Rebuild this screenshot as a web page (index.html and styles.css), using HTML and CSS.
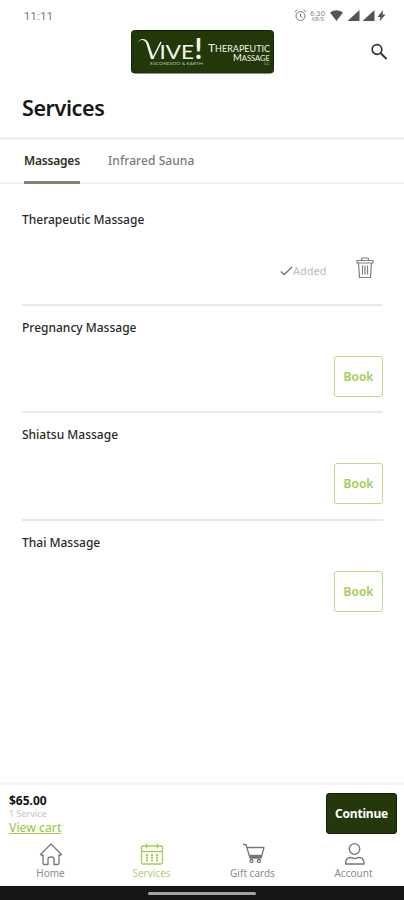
FILE: index.html
```html
<!DOCTYPE html>
<html lang="en">
<head>
<meta charset="utf-8">
<title>Services</title>
<link rel="stylesheet" href="styles.css">
</head>
<body>
<div class="app">
  <div class="status">
    <span class="clock">11:11</span>
    <svg class="status-icons" width="94" height="14" viewBox="0 0 94 14">
      <g fill="none" stroke="#777" stroke-width="1"><circle cx="6.500" cy="7" r="4.500"/><path d="M6.500 4.500v3l2 1M1 3l2.500-2.300M9.500 .7l2.500 2.300"/></g>
      <g fill="#8a8a8a" font-family="Roboto, sans-serif"><text x="16" y="6.500" font-size="7" textLength="15" lengthAdjust="spacingAndGlyphs">6.30</text><text x="18" y="11.500" font-size="5" textLength="12" lengthAdjust="spacingAndGlyphs">KB/S</text></g>
      <g fill="#555"><path d="M36 3.500q6.500-4.500 13 0L42.500 12z"/><path d="M53.500 12h12V1z"/><path d="M68.500 12h12V1z"/><path d="M89 1l-5.500 7h3l-1 4.500 6-7h-3z"/></g>
    </svg>
  </div>
  <header class="header">
    <svg class="logo" width="144" height="44" viewBox="0 0 144 44">
      <rect x=".5" y=".5" width="142" height="42.500" rx="3" fill="#223808" stroke="#14240a"/>
      <path d="M6 14C8 8.500 14 9 15.500 14l4.500 15h3l-5.500-16C15 7.500 8 7.500 6 14z" fill="#f5f7ee"/>
      <path d="M21.500 29l8.500-17" fill="none" stroke="#f5f7ee" stroke-width="1.500"/>
      <g fill="#f5f7ee" font-family="Lato, sans-serif">
        <text x="28.500" y="29" font-size="20" textLength="34.500" lengthAdjust="spacingAndGlyphs">IVE</text>
        <text x="63.500" y="29" font-size="28" font-weight="700">!</text>
        <text x="19" y="35" font-size="4.500" fill="#b9c2a8" textLength="53" lengthAdjust="spacingAndGlyphs">ESCONDIDO &amp; EARTH</text>
        <text x="77" y="22" font-size="9" textLength="62" lengthAdjust="spacingAndGlyphs"><tspan font-size="12">T</tspan>HERAPEUTIC</text>
        <text x="102" y="30.500" font-size="8" textLength="37" lengthAdjust="spacingAndGlyphs"><tspan font-size="10">M</tspan>ASSAGE</text>
        <text x="133" y="35" font-size="3" fill="#b9c2a8">LLC</text>
      </g>
    </svg>
    <svg class="search" width="18" height="18" viewBox="0 0 18 18" fill="none" stroke="#333"><circle cx="7" cy="6.500" r="4.800" stroke-width="1.700"/><path d="M10.500 10l6 6" stroke-width="2"/></svg>
  </header>
  <h1>Services</h1>
  <nav class="tabs">
    <span class="tab active">Massages</span>
    <span class="tab sauna">Infrared Sauna</span>
  </nav>
  <main class="list">
    <section class="item">
      <h2>Therapeutic Massage</h2>
      <div class="actions added">
        <svg width="13" height="10" viewBox="0 0 13 10" fill="none" stroke="#777" stroke-width="1.500"><path d="M1 5.500l3.300 3L12 1"/></svg>
        <span class="added-text">Added</span>
        <svg class="trash" width="18" height="22" viewBox="0 0 18 22" fill="none" stroke="#808080" stroke-width="1.200"><path d="M1 3.500h16v2.500H1zM5.500 3.500V2q0-1 1-1h5q1 0 1 1v1.500M2.500 6l1 14.500h11l1-14.500M6.500 8.500v9M9 8.500v9M11.500 8.500v9"/></svg>
      </div>
    </section>
    <section class="item">
      <h2>Pregnancy Massage</h2>
      <div class="actions"><button class="book">Book</button></div>
    </section>
    <section class="item">
      <h2>Shiatsu Massage</h2>
      <div class="actions"><button class="book">Book</button></div>
    </section>
    <section class="item">
      <h2>Thai Massage</h2>
      <div class="actions"><button class="book">Book</button></div>
    </section>
  </main>
  <div class="cart">
    <div class="summary">
      <span class="price">$65.00</span>
      <span class="count">1 Service</span>
      <a class="view">View cart</a>
    </div>
    <button class="continue">Continue</button>
  </div>
  <nav class="bottom">
    <div class="nav">
      <svg width="24" height="24" viewBox="0 0 24 24"><path d="M1.500 12.500L12 2l10.500 10.500-1.500 1-1-.8V21q0 1.500-1.500 1.500H15V17q0-2-3-2t-3 2v5.500H5.500Q4 22.500 4 21v-8.300l-1 .8z"/></svg>
      <span>Home</span>
    </div>
    <div class="nav on">
      <svg width="24" height="24" viewBox="0 0 24 24"><path d="M3 4h18q1.500 0 1.500 1.500v15q0 1.500-1.500 1.500H3q-1.500 0-1.500-1.500v-15Q1.500 4 3 4zM1.500 9.500h21M6.500 1.500v5M17.500 1.500v5"/><path d="M7 12v7.500M12 12v7.500M17 12v7.500" stroke-width="2" stroke-dasharray="2 .8"/></svg>
      <span>Services</span>
    </div>
    <div class="nav">
      <svg width="24" height="24" viewBox="0 0 24 24"><path d="M2 2.500h3l4 13.500h11.500M6 5.500h17L20.500 15H8.700M8 13.500H21"/><circle cx="10.500" cy="19" r="1.500"/><circle cx="18" cy="19" r="1.500"/></svg>
      <span>Gift cards</span>
    </div>
    <div class="nav">
      <svg width="24" height="24" viewBox="0 0 24 24"><circle cx="12.500" cy="7" r="5.300"/><path d="M3.500 22c0-4 2-6.500 5-6.500 2 0 2.500 1 4 1s2.500-1 4.500-1c3 0 5 2.500 5 6.500z"/></svg>
      <span>Account</span>
    </div>
  </nav>
  <div class="system"><i></i></div>
</div>
</body>
</html>
```
FILE: styles.css
```css
* { box-sizing: border-box; }
body { margin: 0; background: #fff; font-family: "Noto Sans", sans-serif; color: #222; }
.app { width: 404px; height: 900px; display: flex; flex-direction: column; overflow: hidden; }
.status { height: 30px; padding: 9px 16px 0 24px; display: flex; justify-content: space-between; align-items: flex-start; }
.clock { font: 11px/15px Roboto, sans-serif; color: #777; letter-spacing: .4px; }
.header { height: 45px; padding-left: 131px; display: flex; justify-content: space-between; align-items: flex-start; }
.search { margin: 13px 16px 0 0; }
h1 { margin: 0; height: 62px; padding: 18px 0 0 22px; font-size: 21.500px; line-height: 30px; font-weight: 600; letter-spacing: -.4px; color: #181818; }
.tabs { height: 47px; border-top: 3px solid #f0f0f0; border-bottom: 2px solid #efefef; padding-left: 24px; display: flex; gap: 28px; font-size: 12px; }
.tab { height: 44px; line-height: 41px; color: #7b7b7b; font-weight: 500; white-space: nowrap; }
.active { width: 56px; color: #2c3020; border-bottom: 3px solid #828572; font-weight: 600; letter-spacing: -.2px; }
.sauna { letter-spacing: .07px; }
.list { padding: 0 21px 0 22px; flex: 1; }
.item { height: 107.300px; border-bottom: 2px solid #e8e8e8; padding-top: 13px; }
.item:first-child { height: 122px; padding-top: 27px; }
.item:last-child { border: 0; }
h2 { margin: 0; font-size: 12px; line-height: 17px; font-weight: 500; color: #292929; white-space: nowrap; }
.actions { display: flex; justify-content: flex-end; padding-top: 20px; }
.added { align-items: center; padding: 29px 9px 0 0; }
.added-text { font-size: 11px; line-height: 16px; color: #bcbcbc; width: 34px; margin-right: 29px; }
.added > * { transform: translateY(3px); }
.added > .trash { transform: none; }
button { font-family: inherit; padding: 0; }
.book { width: 49px; height: 41px; border: 1.500px solid #bfd98a; border-radius: 3px; background: #fff; color: #a3cc50; font-size: 12px; font-weight: 600; }
.cart { height: 59px; border-top: 3px solid #f5f5f5; display: flex; justify-content: space-between; padding: 8px 7px 0 9px; }
.summary { display: flex; flex-direction: column; align-items: flex-start; }
.price { font-size: 12px; line-height: 15px; font-weight: 700; color: #111; letter-spacing: 0; }
.count { font-size: 9px; line-height: 12px; color: #c4c4c4; }
.view { font-size: 12px; line-height: 15px; font-weight: 500; color: #a3c94e; text-decoration: underline; }
.continue { width: 71px; height: 41px; border: 1px solid #14220a; border-radius: 3px; background: #24380c; color: #fff; font-size: 12px; font-weight: 700; letter-spacing: -.2px; }
.bottom { height: 45px; display: grid; grid-template-columns: repeat(4, 1fr); }
.nav { display: flex; flex-direction: column; align-items: center; font-size: 10px; line-height: 14px; color: #8c8c8c; padding-top: 1px; }
.nav svg { fill: none; stroke: #777; stroke-width: 1.300; stroke-linejoin: round; }
.on { color: #b2d176; }
.on svg { stroke: #a5cb58; }
.system { height: 14px; background: #161616; display: flex; justify-content: center; align-items: center; }
.system i { width: 108px; height: 3px; border-radius: 2px; background: #a3a3a3; }
```
